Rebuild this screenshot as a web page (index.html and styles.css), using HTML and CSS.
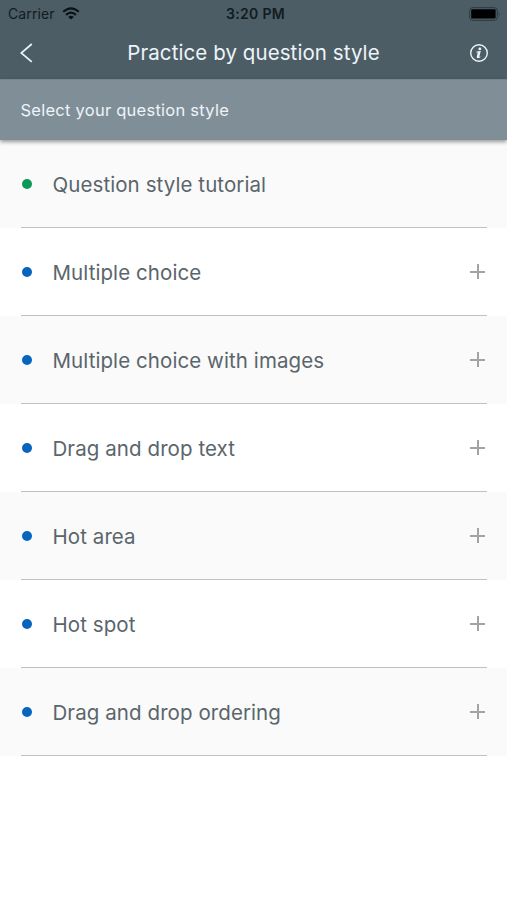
FILE: index.html
```html
<!DOCTYPE html>
<html lang="en">
<head>
<meta charset="utf-8">
<title>Practice by question style</title>
<link rel="stylesheet" href="styles.css">
</head>
<body>
<header class="top">
  <div class="status">
    <div class="carrier"><span>Carrier</span>
      <svg class="wifi" width="18" height="13" viewBox="0 0 18 13"><g fill="none" stroke="currentColor" stroke-width="2.1"><path d="M1.2 4.8Q9-2.2 16.8 4.8"/><path d="M4 7.9Q9 3.4 14 7.9"/></g><path d="M6.2 9.9Q9 7.6 11.8 9.9L9 12.6Z" fill="currentColor"/></svg>
    </div>
    <span class="time">3:20 PM</span>
    <svg class="battery" width="32" height="14" viewBox="0 0 32 14"><rect x=".7" y=".7" width="27.6" height="12.6" rx="3" fill="none" stroke="#2b383f" stroke-width="1"/><rect x="2.2" y="2.2" width="24.4" height="9.4" rx="1" fill="#000"/><path d="M29.8 4.7Q31.5 7 29.8 9.3Z" fill="#26343b"/></svg>
  </div>
  <nav class="nav">
    <svg class="back" width="14" height="20" viewBox="0 0 14 20"><path d="M11.8 1L1.2 10L11.8 18.8" fill="none" stroke="currentColor" stroke-width="1.7"/></svg>
    <h1>Practice by question style</h1>
    <svg class="info" width="20" height="20" viewBox="0 0 20 20"><circle cx="10" cy="10" r="8.3" fill="none" stroke="currentColor" stroke-width="1.4"/><circle cx="10.8" cy="5.9" r="1.4" fill="currentColor"/><path d="M7.5 8.5L11.8 8.1L10.3 13.4Q10.3 14.1 12.1 13.2Q10.6 15.3 8.8 15.2Q7.4 14.9 7.8 13.4L8.8 9.6L7.4 9.4Z" fill="currentColor"/></svg>
  </nav>
</header>
<div class="subtitle"><span>Select your question style</span></div>
<ul class="list">
  <li class="tutorial"><i class="dot"></i><span class="label">Question style tutorial</span></li>
  <li><i class="dot"></i><span class="label">Multiple choice</span><i class="plus"></i></li>
  <li><i class="dot"></i><span class="label">Multiple choice with images</span><i class="plus"></i></li>
  <li><i class="dot"></i><span class="label">Drag and drop text</span><i class="plus"></i></li>
  <li><i class="dot"></i><span class="label">Hot area</span><i class="plus"></i></li>
  <li><i class="dot"></i><span class="label">Hot spot</span><i class="plus"></i></li>
  <li><i class="dot"></i><span class="label">Drag and drop ordering</span><i class="plus"></i></li>
</ul>
</body>
</html>
```
FILE: styles.css
```css
* { box-sizing: border-box; }
body { margin: 0; background: #fff; color: #5a656c; font-family: Inter, "Liberation Sans", sans-serif; height: 900px; overflow: hidden; }
.top { height: 79px; background: #4d5d66; }
.status { display: grid; grid-template-columns: 1fr auto 1fr; align-items: center; height: 27px; padding: 0 6px 0 8px; color: #111b21; }
.carrier { display: flex; align-items: center; gap: 7px; font-size: 14px; letter-spacing: 0.1px; }
.wifi { color: #0b1216; }
.time { font-size: 14px; font-weight: 600; letter-spacing: 0.3px; padding-left: 2px; }
.battery { justify-self: end; }
.nav { display: flex; align-items: center; justify-content: space-between; height: 52px; padding: 0 18px 0 20px; color: #edf4f9; }
h1 { margin: 0 0 2px 4px; font-size: 20.5px; font-weight: 400; letter-spacing: 0.08px; }
.subtitle { position: relative; display: flex; align-items: center; height: 61px; padding: 0 0 1px 20.5px; background: #808e98; color: #edf4f9; font-size: 16.5px; letter-spacing: 0.25px; box-shadow: 0 2px 4px rgba(0,0,0,.4); border-top: 1px solid #75848d; }
.list { list-style: none; margin: 0; padding: 0; }
.list li { display: flex; align-items: center; height: 88px; padding: 0 22px 0 21.5px; background: linear-gradient(#bdc2c6, #bdc2c6) 21px 87px / 466px 1px no-repeat; }
.list li:nth-child(odd) { background-color: #fafafa; }
.dot { width: 10px; height: 10px; border-radius: 50%; background: #0765bd; margin-right: 21px; }
.tutorial .dot { background: #079b55; }
.label { font-size: 20.5px; letter-spacing: 0.08px; padding-top: 1px; }
.plus { width: 15px; height: 15px; margin: 0 0 1px auto; background: linear-gradient(#a0a4a7, #a0a4a7) 0 7px / 15px 2px no-repeat, linear-gradient(#a0a4a7, #a0a4a7) 7px 0 / 2px 15px no-repeat; }
```
